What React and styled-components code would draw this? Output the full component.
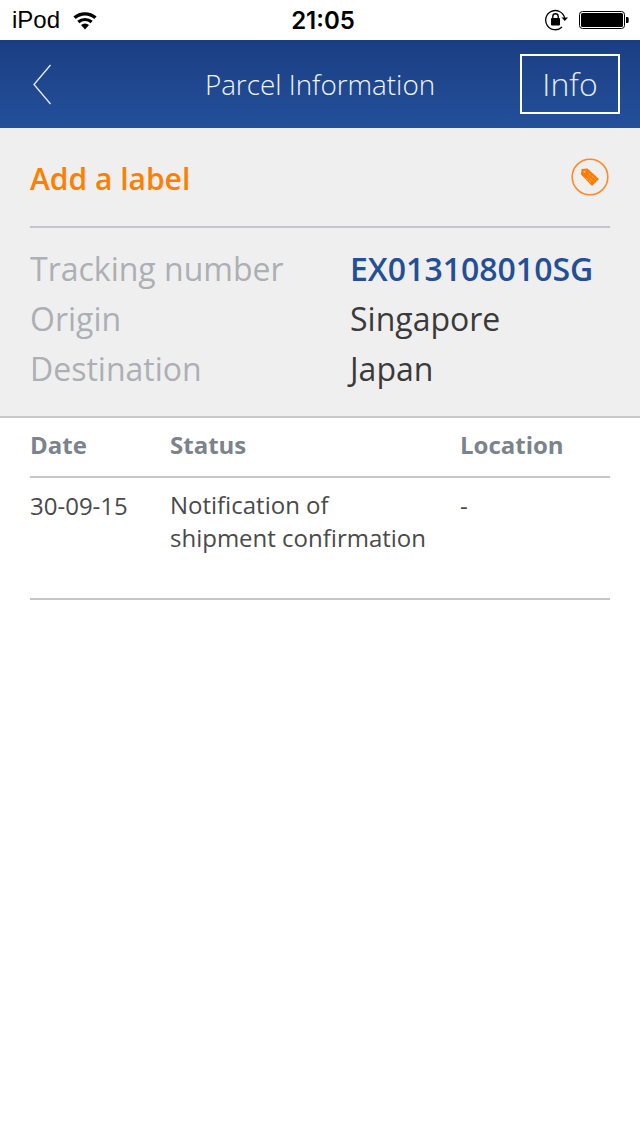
import React from "react";
import styled, { createGlobalStyle } from "styled-components";

const Global = createGlobalStyle`
  html, body { margin: 0; padding: 0; background: #fff; }
  body { font-family: "Open Sans", "Liberation Sans", sans-serif; }
`;

const Page = styled.div`
  width: 640px;
  height: 1136px;
  display: flex;
  flex-direction: column;
  background: #fff;
  overflow: hidden;
`;

const StatusBar = styled.div`
  height: 40px;
  padding: 0 11px 0 12px;
  display: grid;
  grid-template-columns: 1fr auto 1fr;
  align-items: center;
  box-sizing: border-box;
  color: #000;
  font-family: "Liberation Sans", Arial, sans-serif;
`;
const StatusLeft = styled.div`
  display: flex;
  align-items: center;
  gap: 12px;
  font-size: 24px;
`;
const StatusTime = styled.div`
  font-family: Inter, "Liberation Sans", sans-serif;
  font-size: 24px;
  font-weight: 600;
  margin-left: 5px;
`;
const StatusRight = styled.div`
  display: flex;
  align-items: center;
  justify-content: flex-end;
  gap: 10px;
`;

const Header = styled.header`
  height: 88px;
  padding: 0 20px;
  display: grid;
  grid-template-columns: 1fr auto 1fr;
  align-items: center;
  background: linear-gradient(#1b3e83, #23509a);
  color: #fff;
`;
const BackButton = styled.div`
  display: flex;
  align-items: center;
  padding-left: 12px;
`;
const Title = styled.div`
  font-size: 27.8px;
  font-weight: 300;
  color: #f2f5fa;
`;
const InfoButton = styled.div`
  justify-self: end;
  width: 100px;
  height: 60px;
  box-sizing: border-box;
  border: 2px solid #fff;
  padding-bottom: 2px;
  display: flex;
  align-items: center;
  justify-content: center;
  font-size: 32px;
  font-weight: 300;
  color: #e6ebf4;
`;

const Panel = styled.section`
  background: #efefef;
  height: 290px;
  box-sizing: border-box;
  border-bottom: 2px solid #c9c9cb;
  padding: 0 30px;
`;
const LabelRow = styled.div`
  height: 100px;
  box-sizing: border-box;
  border-bottom: 2px solid #c6c6ca;
  display: flex;
  align-items: center;
  justify-content: space-between;
`;
const AddLabel = styled.div`
  font-size: 30px;
  font-weight: 600;
  color: #ff7f00;
  padding-top: 2px;
`;
const TagWrap = styled.div`
  width: 38px;
  height: 38px;
  margin-right: 1px;
`;
const InfoList = styled.div`
  padding-top: 15px;
  display: flex;
  flex-direction: column;
`;
const InfoRow = styled.div`
  height: 50px;
  display: grid;
  grid-template-columns: 320px 1fr;
  align-items: center;
  font-size: 32px;
`;
const InfoKey = styled.div`
  color: #acafb4;
  font-weight: 400;
`;
const InfoValue = styled.div`
  color: ${(p) => (p.$accent ? "#234f99" : "#3a3a3a")};
  font-weight: ${(p) => (p.$accent ? 600 : 400)};
`;

const Table = styled.section`
  padding: 0 30px;
`;
const TableRow = styled.div`
  display: grid;
  grid-template-columns: 140px 290px 1fr;
  box-sizing: border-box;
  border-bottom: 2px solid #c6c6ca;
  height: ${(p) => p.$height}px;
  align-items: ${(p) => (p.$head ? "center" : "start")};
  padding-top: ${(p) => (p.$head ? 0 : 11)}px;
  padding-bottom: ${(p) => (p.$head ? 5 : 0)}px;
`;
const HeadCell = styled.div`
  font-size: 24px;
  font-weight: 700;
  color: #7b838d;
`;
const Cell = styled.div`
  font-size: 24px;
  line-height: 33px;
  color: #4a4a4a;
`;
const StatusCell = styled(Cell)`
  margin-top: -1px;
`;

const Wifi = () => (
  <svg width="26" height="20" viewBox="0 0 26 20" fill="#000">
    <path d="M13 19.500 9 15a6 6 0 0 1 8 0Z" />
    <path d="M7.400 13.200 5.300 10.800a11.600 11.600 0 0 1 15.400 0l-2.100 2.400a8.400 8.400 0 0 0-11.200 0Z" />
    <path d="M3.700 9 1.400 6.600a17.400 17.400 0 0 1 23.200 0L22.300 9a14 14 0 0 0-18.600 0Z" />
  </svg>
);

const RotationLock = () => (
  <svg width="24" height="22" viewBox="0 0 24 22">
    <path d="M19.600 8.800A9.600 9.600 0 1 0 17 18" fill="none" stroke="#000" strokeWidth="1.300" />
    <path d="M16.500 8.500h6.500l-3.200 3.600Z" fill="#000" />
    <rect x="6" y="9" width="9" height="7.400" rx="0.800" fill="#000" />
    <path d="M7.800 9.500V7.400a2.700 2.700 0 0 1 5.400 0v2.100" fill="none" stroke="#000" strokeWidth="1.400" />
  </svg>
);

const Battery = () => (
  <svg width="50" height="20" viewBox="0 0 50 20">
    <rect x="0.500" y="1.500" width="45" height="17" rx="3" fill="none" stroke="#000" />
    <rect x="2" y="3" width="42" height="14" rx="1.600" fill="#000" />
    <path d="M47 7h1.200a1.500 1.500 0 0 1 1.500 1.500v3a1.500 1.500 0 0 1-1.500 1.500H47Z" fill="#000" />
  </svg>
);

const BackChevron = () => (
  <svg width="20" height="42" viewBox="0 0 20 42" fill="none">
    <path d="M18.500 2 2 21.500 18.500 41" stroke="#e8edf6" strokeWidth="1.300" />
  </svg>
);

const TagIcon = () => (
  <svg width="38" height="38" viewBox="0 0 38 38">
    <circle cx="19" cy="19" r="17.800" fill="none" stroke="#ff8a26" strokeWidth="1.600" />
    <path d="M10.500 11 16.500 10.500 28 21 21 28 10 16.500Z" fill="#ff7a00" />
    <circle cx="13.500" cy="13.800" r="1" fill="#ffd2a8" />
    <path d="M18 15.500l6.500 6M16 17.500l6.500 6M15 20l5 4.500" stroke="#ffc793" strokeWidth="1" strokeDasharray="1 1" />
  </svg>
);

export default function App() {
  return (
    <Page>
      <Global />
      <StatusBar>
        <StatusLeft>
          iPod
          <Wifi />
        </StatusLeft>
        <StatusTime>21:05</StatusTime>
        <StatusRight>
          <RotationLock />
          <Battery />
        </StatusRight>
      </StatusBar>
      <Header>
        <BackButton>
          <BackChevron />
        </BackButton>
        <Title>Parcel Information</Title>
        <InfoButton>Info</InfoButton>
      </Header>
      <Panel>
        <LabelRow>
          <AddLabel>Add a label</AddLabel>
          <TagWrap>
            <TagIcon />
          </TagWrap>
        </LabelRow>
        <InfoList>
          <InfoRow>
            <InfoKey>Tracking number</InfoKey>
            <InfoValue $accent>EX013108010SG</InfoValue>
          </InfoRow>
          <InfoRow>
            <InfoKey>Origin</InfoKey>
            <InfoValue>Singapore</InfoValue>
          </InfoRow>
          <InfoRow>
            <InfoKey>Destination</InfoKey>
            <InfoValue>Japan</InfoValue>
          </InfoRow>
        </InfoList>
      </Panel>
      <Table>
        <TableRow $head $height={60}>
          <HeadCell>Date</HeadCell>
          <HeadCell>Status</HeadCell>
          <HeadCell>Location</HeadCell>
        </TableRow>
        <TableRow $height={122}>
          <Cell>30-09-15</Cell>
          <StatusCell>
            Notification of
            <br />
            shipment confirmation
          </StatusCell>
          <Cell>-</Cell>
        </TableRow>
      </Table>
    </Page>
  );
}
